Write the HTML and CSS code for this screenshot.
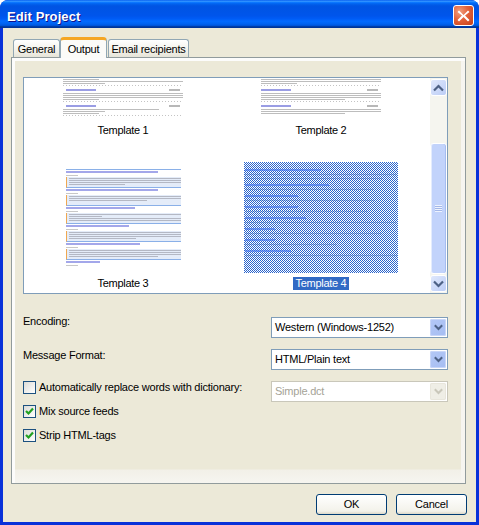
FILE: index.html
```
<!DOCTYPE html>
<html lang="en">
<head>
<meta charset="utf-8">
<title>Edit Project</title>
<link rel="stylesheet" href="styles.css">
</head>
<body>
<div class="window">
  <header class="titlebar">
    <span class="title">Edit Project</span>
    <span class="close"><svg width="21" height="21" viewBox="0 0 21 21"><path d="M6 5.500l4.500 4.500L15 5.500l1.500 1.500-4.500 3.500 4.500 4.500-1.500 1.500-4.500-4.500L6 16.500 4.500 15l4.500-4.500L4.500 7z" fill="#fff"/></svg></span>
  </header>
  <main class="body">
    <nav class="tabs">
      <span class="tab tab-general">General</span>
      <span class="tab tab-active">Output</span>
      <span class="tab tab-email">Email recipients</span>
    </nav>
    <section class="panel">
      <div class="list">
        <div class="grid">
          <div class="cell">
            <div class="thumb-clip">
              <div class="page">
                <i class="g w30"></i><i class="g w100"></i><i class="g w35"></i><i class="dots"></i>
                <div class="head"><i class="link"></i><i class="date"></i></div>
                <i class="g w100"></i><i class="g w100"></i><i class="g w100"></i><i class="g w30"></i><i class="dots"></i>
                <div class="head"><i class="link"></i><i class="date"></i></div>
                <i class="g w80"></i><i class="g w35"></i><i class="g w30"></i><i class="dots"></i>
              </div>
            </div>
            <span class="label">Template 1</span>
          </div>
          <div class="cell">
            <div class="thumb-clip">
              <div class="page">
                <i class="g w100"></i><i class="g w100"></i><i class="g w30"></i><i class="dots"></i>
                <div class="head head-flush"><i class="link"></i><i class="date"></i></div>
                <i class="g w100"></i><i class="g w100"></i><i class="g w100"></i><i class="g w70"></i><i class="dots"></i>
                <div class="head head-flush"><i class="link"></i><i class="date"></i></div>
                <i class="g w100"></i><i class="g w100"></i><i class="g w70"></i>
              </div>
            </div>
            <span class="label">Template 2</span>
          </div>
          <div class="cell">
            <div class="thumb-tall">
              <div class="t3">
                <div class="t3-sec"><i class="t3-title w80"></i><i class="t3-date"></i><div class="t3-block"><i class="g w100"></i><i class="g w100"></i><i class="g w100"></i><i class="g w50"></i></div></div>
                <div class="t3-sec"><i class="t3-title w80"></i><i class="t3-date"></i><div class="t3-block t3-short"><i class="g w100"></i><i class="g w100"></i><i class="g w70"></i></div></div>
                <div class="t3-sec"><i class="t3-title w60"></i><i class="t3-date"></i><div class="t3-block"><i class="g w100"></i><i class="g w30"></i><i class="g w100"></i><i class="g w100"></i></div></div>
                <div class="t3-sec"><i class="t3-title w55"></i><i class="t3-date"></i><div class="t3-block"><i class="g w100"></i><i class="g w100"></i><i class="g w100"></i><i class="g w60"></i></div></div>
                <div class="t3-sec"><i class="t3-title w65"></i><i class="t3-date"></i><div class="t3-block"><i class="g w100"></i><i class="g w100"></i><i class="g w100"></i><i class="g w80"></i></div></div>
                <div class="t3-sec t3-last"><i class="t3-title w30"></i><i class="t3-date"></i></div>
              </div>
            </div>
            <span class="label">Template 3</span>
          </div>
          <div class="cell">
            <div class="thumb-tall">
              <div class="t4">
                <svg class="t4-bg" width="154" height="111"><defs><pattern id="chk" width="2" height="2" patternUnits="userSpaceOnUse"><rect width="2" height="2" fill="#fff"/><rect width="1" height="1" fill="#2a64cc"/><rect x="1" y="1" width="1" height="1" fill="#2a64cc"/></pattern></defs><rect width="154" height="111" fill="url(#chk)"/></svg>
                <i class="t4-link w50"></i><i class="t4-text w100"></i><i class="t4-text w90"></i>
                <i class="t4-link w55"></i><i class="t4-text w85"></i>
                <i class="t4-link w35"></i><i class="t4-text w85"></i>
                <i class="t4-link w35"></i><i class="t4-text w80"></i>
                <i class="t4-link w40"></i><i class="t4-text w100"></i>
                <i class="t4-link w20"></i><i class="t4-text w90"></i>
                <i class="t4-link w20"></i><i class="t4-text w60"></i>
                <i class="t4-link w30"></i><i class="t4-text w100"></i>
              </div>
            </div>
            <span class="label label-selected">Template 4</span>
          </div>
        </div>
        <div class="scrollbar">
          <span class="sb-btn"><svg width="11" height="8" viewBox="0 0 11 8"><path d="M1 6.500l4.500-4.500L10 6.500" fill="none" stroke="#4d6185" stroke-width="2.200"/></svg></span>
          <div class="sb-track">
            <div class="sb-thumb"><span class="grip"></span></div>
          </div>
          <span class="sb-btn"><svg width="11" height="8" viewBox="0 0 11 8"><path d="M1 1.500l4.500 4.500L10 1.500" fill="none" stroke="#4d6185" stroke-width="2.200"/></svg></span>
        </div>
      </div>

      <div class="form">
        <span class="field-label field-encoding">Encoding:</span>
        <div class="select"><span class="select-text">Western (Windows-1252)</span><span class="select-btn"><svg width="9" height="7" viewBox="0 0 9 7"><path d="M.8 1.200L4.500 5l3.700-3.800" fill="none" stroke="#4d6185" stroke-width="2"/></svg></span></div>
        <span class="field-label">Message Format:</span>
        <div class="select"><span class="select-text">HTML/Plain text</span><span class="select-btn"><svg width="9" height="7" viewBox="0 0 9 7"><path d="M.8 1.200L4.500 5l3.700-3.800" fill="none" stroke="#4d6185" stroke-width="2"/></svg></span></div>
        <label class="check"><span class="box box-off"></span><span>Automatically replace words with dictionary:</span></label>
        <div class="select select-off"><span class="select-text">Simple.dct</span><span class="select-btn"><svg width="9" height="7" viewBox="0 0 9 7"><path d="M.8 1.200L4.500 5l3.700-3.800" fill="none" stroke="#c9c7ba" stroke-width="2"/></svg></span></div>
      </div>
      <div class="checks">
        <label class="check"><span class="box"><svg width="11" height="11" viewBox="0 0 11 11"><path d="M2 5l2.500 2.500L9 2.500" fill="none" stroke="#21a121" stroke-width="2.200"/></svg></span><span>Mix source feeds</span></label>
        <label class="check"><span class="box"><svg width="11" height="11" viewBox="0 0 11 11"><path d="M2 5l2.500 2.500L9 2.500" fill="none" stroke="#21a121" stroke-width="2.200"/></svg></span><span>Strip HTML-tags</span></label>
      </div>
    </section>
    <footer class="actions">
      <button class="btn" type="button">OK</button>
      <button class="btn" type="button">Cancel</button>
    </footer>
  </main>
</div>
</body>
</html>
```
FILE: styles.css
```
* { box-sizing: border-box; }
html, body { margin: 0; padding: 0; background: #fff; }
body { font: 11px/13px "Liberation Sans", Arial, sans-serif; color: #000; letter-spacing: -.22px; }
i { display: block; font-style: normal; }

.window {
  width: 479px; height: 525px;
  display: flex; flex-direction: column;
  background: #0831d9;
  border-radius: 8px 8px 0 0;
  overflow: hidden;
}

.titlebar {
  height: 28px; flex: none;
  display: flex; align-items: center; justify-content: space-between;
  padding: 0 5px 0 7px;
  background: linear-gradient(#0058ee 0, #3593ff 4%, #288eff 6%, #127dff 8%, #036ffc 10%, #0262ee 14%, #0057e5 20%, #0054e3 24%, #0055eb 56%, #005bf5 66%, #026afe 76%, #0062ef 86%, #0052d6 92%, #0040ab 94%, #003092 100%);
}
.title {
  color: #fff; font-weight: bold; font-size: 13px; letter-spacing: .1px;
  text-shadow: 1px 1px 0 #0f1089;
  padding-top: 4px;
}
.close {
  width: 21px; height: 21px;
  display: block;
  border: 1px solid #fff;
  border-radius: 3px;
  background: radial-gradient(circle at 30% 30%, #f0a080 0, #e2613a 45%, #c63f18 100%);
  margin-top: 3px;
}
.close svg { display: block; margin: -1px; }

.body {
  flex: 1;
  margin: 0 3px 3px;
  padding: 9px 0 0 8px;
  background: #ece9d8;
  display: flex; flex-direction: column;
}

.tabs { display: flex; align-items: flex-end; height: 20px; padding-left: 2px; position: relative; z-index: 1; }
.tab {
  height: 18px;
  padding-top: 3px;
  text-align: center;
  border: 1px solid #91a7b4;
  border-bottom: 0;
  border-radius: 3px 3px 0 0;
  background: linear-gradient(#fff, #f0efe6 70%, #e6e4d8);
}
.tab-general { width: 47px; }
.tab-email { width: 81px; margin-left: 1px; }
.tab-active {
  width: 47px; height: 21px;
  margin-bottom: -1px;
  padding-top: 3px;
  background: #fbfbf8;
  border-top: 3px solid #f5a623;
  border-radius: 4px 4px 0 0;
}

.panel {
  width: 455px; height: 427px; flex: none;
  border: 1px solid #919b9c;
  padding: 19px 0 0 11px;
  background: linear-gradient(#ece9d8 calc(100% - 14px), #f2f0e8 calc(100% - 13px), #f6f5f0);
  box-shadow: inset 3px 3px 0 #fcfcfb, inset -4px 0 0 #f6f5f0;
}

.list {
  width: 425px; height: 217px;
  display: flex;
  border: 1px solid #7f9db9;
  background: #fff;
}
.grid {
  flex: 1;
  display: grid;
  grid-template-columns: 198px 198px;
  grid-auto-rows: min-content;
  row-gap: 25px;
  justify-items: center;
  overflow: hidden;
}
.cell { display: flex; flex-direction: column; align-items: center; width: 198px; }
.thumb-clip { height: 46px; width: 120px; overflow: hidden; }
.thumb-tall { height: 115px; padding-bottom: 4px; width: 154px; display: flex; align-items: center; justify-content: center; }
.label { padding: 0 3px; letter-spacing: -.3px; }
.label-selected { background: #316ac5; color: #fff; }

.page { width: 120px; display: flex; flex-direction: column; gap: 1px; padding-top: 1px; filter: blur(.45px); }
.g { height: 1px; background: #bdbdbd; }
.dots { height: 1px; background: repeating-linear-gradient(90deg, #c4c4c4 0 1px, #fff 1px 3px); }
.head { display: flex; justify-content: space-between; align-items: center; padding: 0 3px; margin: 2px 0 1px; height: 2px; }
.head-flush { padding-left: 0; }
.link { width: 30px; height: 2px; background: #9a9de4; }
.date { width: 11px; height: 2px; background: #b8b8b8; }

.w20 { width: 20%; } .w30 { width: 30%; } .w35 { width: 35%; } .w40 { width: 40%; } .w50 { width: 50%; }
.w55 { width: 55%; } .w60 { width: 60%; } .w65 { width: 65%; } .w70 { width: 70%; } .w80 { width: 80%; }
.w85 { width: 85%; } .w90 { width: 90%; } .w100 { width: 100%; }

.t3 { width: 115px; height: 97px; border-top: 1px solid #8ab0e8; overflow: hidden; filter: blur(.45px); }
.t3-sec { height: 18px; padding-top: 1px; }
.t3-title { height: 2px; background: #a3a7ea; }
.t3-date { width: 12px; height: 1px; margin-top: 2px; background: #c8c8c8; }
.t3-block {
  margin-top: 1px; height: 11px; padding: 1px 0 0 2px;
  display: flex; flex-direction: column; gap: 1px;
  overflow: hidden;
  background: #e4ecf9;
  border-left: 1px solid #f0a850;
  border-bottom: 1px solid #8ab0e8;
}
.t3-block .g { background: #b4b8c4; }

.t4 {
  position: relative;
  width: 154px; height: 111px; padding: 7px 1px 0;
  display: flex; flex-direction: column; gap: 3px;
}
.t4-bg { position: absolute; left: 0; top: 0; display: block; }
.t4-link, .t4-text { position: relative; }
.t4-link { height: 2px; background: #3f72ee; opacity: .6; }
.t4-text { height: 1px; background: #3566b8; opacity: .35; }
.t4-text + .t4-link { margin-top: 2px; }

.scrollbar { width: 17px; flex: none; display: flex; flex-direction: column; padding: 1px 0; background: #f5f5ef; }
.sb-btn {
  height: 17px; flex: none;
  display: flex; align-items: center; justify-content: center;
  border: 1px solid #fff; border-radius: 3px;
  background: linear-gradient(135deg, #dfe8fc, #bccdf6);
}
.sb-track { flex: 1; padding: 47px 0 1px; }
.sb-thumb {
  height: 100%;
  display: flex; align-items: center; justify-content: center;
  border: 1px solid #fff; border-radius: 3px;
  background: #c2d3fb;
  box-shadow: inset 1px 0 0 #e4ecfd, inset -1px 0 0 #a6bdf0;
}
.grip { width: 7px; height: 7px; background: repeating-linear-gradient(#eef3fe 0 1px, #a3b7e8 1px 2px); }

.form {
  display: grid;
  grid-template-columns: 248px 177px;
  row-gap: 11px;
  margin-top: 23px;
  align-items: start;
}
.field-encoding { margin-top: -2px; }
.select {
  height: 21px;
  display: flex; align-items: center; justify-content: space-between;
  border: 1px solid #7f9db9;
  background: #fff;
  padding: 0 1px 0 3px;
}
.select-off { border-color: #c9c7ba; color: #a5a397; }
.select-text { flex: 1; }
.select-btn {
  width: 16px; height: 17px;
  display: flex; align-items: center; justify-content: center;
  border-radius: 2px;
  background: linear-gradient(135deg, #b4c8f6, #a5bdf2);
  box-shadow: inset 0 0 0 1px #c8d6f8;
}
.select-off .select-btn { background: #efeee6; box-shadow: inset 0 0 0 1px #e8e6dc; }

.check { display: flex; align-items: center; gap: 3px; height: 13px; }
.box {
  width: 13px; height: 13px; flex: none;
  display: block;
  border: 1px solid #1c5180;
  background: linear-gradient(135deg, #dcdcd7, #fff);
}
.box svg { display: block; }
.checks { display: flex; flex-direction: column; gap: 11px; margin-top: 3px; }

.actions { display: flex; justify-content: flex-end; gap: 9px; padding-top: 10px; width: 456px; }
.btn {
  width: 71px; height: 21px; padding: 0;
  font: inherit; letter-spacing: inherit; color: #000;
  border: 1px solid #003c74; border-radius: 3px;
  background: linear-gradient(#fff, #f3f2ea 85%, #dcd8c8);
}
```
